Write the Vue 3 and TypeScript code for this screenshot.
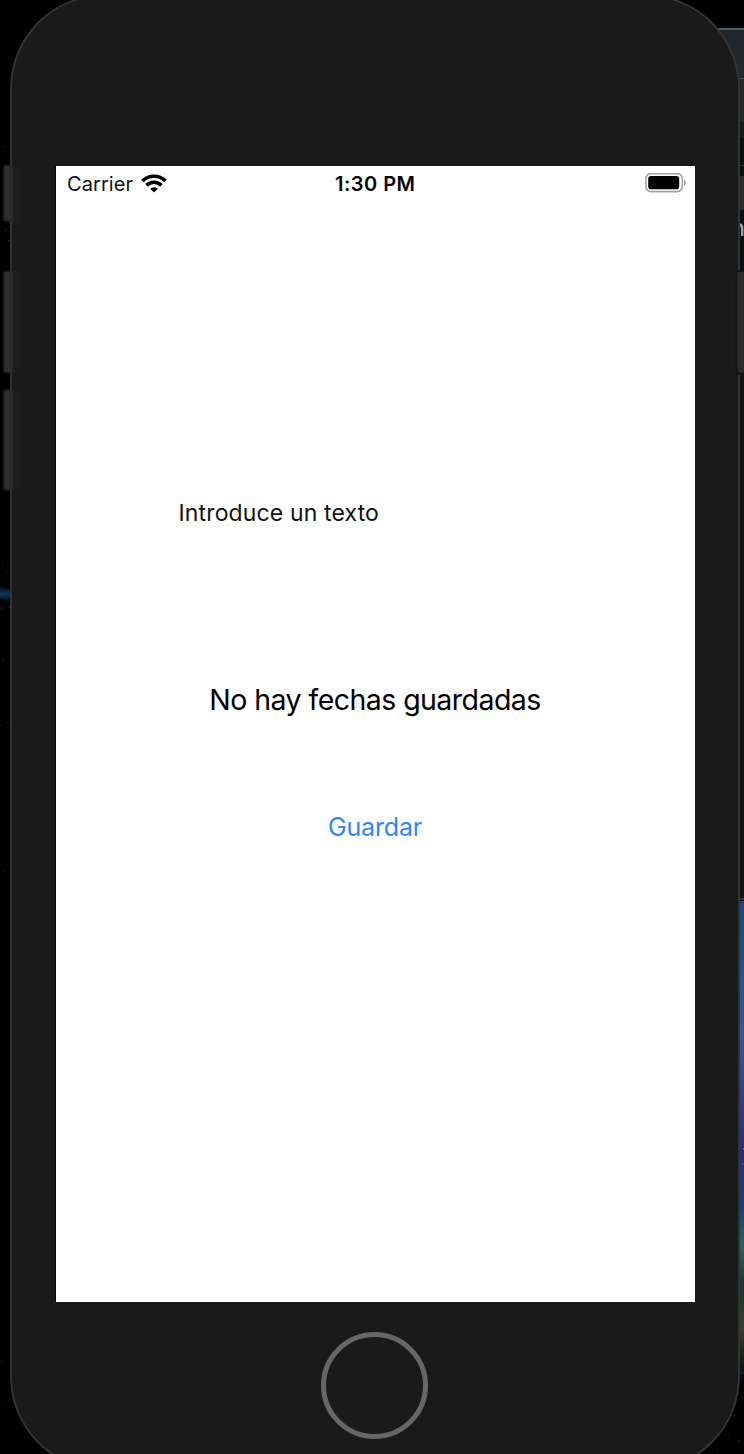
<script setup lang="ts">
const carrier: string = 'Carrier'
const time: string = '1:30 PM'
const stars: { x: number; y: number; c: string }[] = [
  { x: 3, y: 146, c: '#0b2024' }, { x: 7, y: 137, c: '#071316' }, { x: 5, y: 229, c: '#0b3540' },
  { x: 8, y: 240, c: '#0d303c' }, { x: 2, y: 216, c: '#09242b' }, { x: 9, y: 226, c: '#0c2228' },
  { x: 2, y: 564, c: '#15151b' }, { x: 5, y: 570, c: '#1c1c22' }, { x: 9, y: 606, c: '#34302a' },
  { x: 1, y: 607, c: '#333333' }, { x: 2, y: 660, c: '#18222c' }, { x: 7, y: 722, c: '#101c28' },
  { x: 3, y: 870, c: '#1d2430' }, { x: 1, y: 1361, c: '#1c1c1c' }, { x: 4, y: 1403, c: '#111111' },
  { x: 741, y: 1372, c: '#1c2a70' }, { x: 734, y: 1414, c: '#182048' }, { x: 741, y: 1396, c: '#14255a' },
  { x: 728, y: 1433, c: '#131a42' }, { x: 738, y: 1440, c: '#19234f' }, { x: 717, y: 1449, c: '#171f42' },
  { x: 743, y: 1148, c: '#6872c0' }, { x: 742, y: 1163, c: '#5060b0' },
]
</script>

<template>
  <main class="desktop">
    <svg class="backdrop" width="744" height="1454" viewBox="0 0 744 1454" aria-hidden="true">
      <defs>
        <linearGradient id="sky" x1="0" y1="0" x2="0" y2="1">
          <stop offset="0" stop-color="#17497e" />
          <stop offset=".28" stop-color="#335797" />
          <stop offset=".52" stop-color="#252f79" />
          <stop offset=".64" stop-color="#174174" />
          <stop offset=".72" stop-color="#2c5f63" />
          <stop offset=".80" stop-color="#16362f" />
          <stop offset=".89" stop-color="#2b4530" />
          <stop offset="1" stop-color="#03060d" />
        </linearGradient>
        <linearGradient id="bar" x1="0" y1="0" x2="0" y2="1">
          <stop offset="0" stop-color="#20272c" />
          <stop offset="1" stop-color="#24292d" />
        </linearGradient>
        <linearGradient id="comet" x1="0" y1="0" x2="0" y2="1">
          <stop offset="0" stop-color="#000" />
          <stop offset=".5" stop-color="#123461" />
          <stop offset="1" stop-color="#000" />
        </linearGradient>
      </defs>
      <rect x="700" y="28" width="44" height="94" fill="url(#bar)" />
      <rect x="700" y="28" width="44" height="2" fill="#555a5d" />
      <rect x="736" y="78" width="8" height="1" fill="#45494c" />
      <rect x="738" y="122" width="6" height="15" fill="#171b20" />
      <rect x="738" y="137" width="6" height="763" fill="#0b0e13" />
      <rect x="738" y="165" width="6" height="1" fill="#303439" />
      <rect x="738" y="176" width="6" height="34" fill="#2a2a2a" />
      <path d="M738 224.500h1c2 0 3.200 1.500 3.200 4v7.500" fill="none" stroke="#a0a0a0" stroke-width="2.500" />
      <rect x="738" y="374" width="6" height="524" fill="#141414" />
      <rect x="738" y="898" width="6" height="2" fill="#39343c" />
      <rect x="738" y="901" width="6" height="480" fill="url(#sky)" />
      <path d="M0 586l12 4v12l-12-3z" fill="url(#comet)" />
      <rect v-for="(s, i) in stars" :key="i" :x="s.x" :y="s.y" width="1.500" height="1.500" :fill="s.c" />
      <g fill="#2d2d2d" stroke="#111" stroke-width="1.500">
        <rect x="3.200" y="165" width="14" height="56.500" rx="3" />
        <rect x="3.200" y="271" width="14" height="102" rx="3" />
        <rect x="3.200" y="389.500" width="14" height="101" rx="3" />
      </g>
      <rect x="11" y="-4.500" width="728" height="1474" rx="93" fill="#1a1a1a" stroke="#363636" stroke-width="1.800" />
      <g fill="#292929">
        <rect x="10" y="165.500" width="3" height="55.500" />
        <rect x="10" y="271.500" width="3" height="101" />
        <rect x="10" y="390" width="3" height="100" />
      </g>
      <g fill="#1c1c1c">
        <rect x="13" y="166" width="7" height="55" />
        <rect x="13" y="272" width="7" height="100" />
        <rect x="13" y="390" width="7" height="100" />
      </g>
      <rect x="736.500" y="271" width="14" height="102.500" rx="2.500" fill="#2c2c2c" stroke="#111" stroke-width="1.500" />
    </svg>

    <section class="screen">
      <header class="status">
        <div class="network">
          <span class="carrier">{{ carrier }}</span>
          <svg class="wifi" width="26" height="19" viewBox="0 0 26 19" aria-hidden="true">
            <g fill="none" stroke="#000" stroke-width="3.700">
              <path d="M1.500 6.900a16.500 16.500 0 0 1 23 0" />
              <path d="M5.500 11.300a10.800 10.800 0 0 1 15 0" />
            </g>
            <path d="M13 18.600l-3.800-3.900a5.400 5.400 0 0 1 7.600 0z" fill="#000" />
          </svg>
        </div>
        <span class="time">{{ time }}</span>
        <svg class="battery" width="41" height="20" viewBox="0 0 41 20" aria-hidden="true">
          <rect x=".9" y=".6" width="36.400" height="18" rx="5" fill="none" stroke="#a2a2a2" stroke-width="1.600" />
          <rect x="3.200" y="3" width="31" height="13.200" rx="2.800" fill="#000" />
          <path d="M39 6.600c2.200 1 2.200 5.400 0 6.400z" fill="#999" />
        </svg>
      </header>
      <div class="content">
        <label class="prompt"><span>Introduce un texto</span></label>
        <p class="message"><span>No hay fechas guardadas</span></p>
        <button class="save" type="button"><span>Guardar</span></button>
      </div>
    </section>
    <div class="home"></div>
  </main>
</template>

<style>
body { background: #000; }
</style>

<style scoped>
.desktop {
  position: relative;
  box-sizing: border-box;
  width: 744px;
  height: 1454px;
  padding: 166px 49px 0 56px;
  overflow: hidden;
  background: #000;
  font-family: Inter, "Liberation Sans", sans-serif;
  color: #111;
}
.backdrop { position: absolute; top: 0; left: 0; display: block; }
.screen {
  position: relative;
  width: 639px;
  height: 1136px;
  background: #fff;
  box-shadow: -1px 0 0 #080808;
}
.status {
  display: grid;
  grid-template-columns: 1fr auto 1fr;
  align-items: center;
  height: 34px;
  padding: 0 9.500px 0 11px;
}
.network { display: flex; align-items: center; gap: 8px; }
.carrier { padding-top: 2px; font-size: 20px; line-height: 32px; letter-spacing: .08px; }
.wifi { display: block; }
.time { padding: 2px 2px 0 0; font-size: 20px; line-height: 32px; font-weight: 600; letter-spacing: .5px; color: #000; }
.battery { justify-self: end; display: block; }
.content { display: flex; flex-direction: column; align-items: center; }
.prompt {
  box-sizing: border-box;
  width: 100%;
  margin-top: 293px;
  padding-left: 122.500px;
  font-size: 23px;
  line-height: 40px;
  letter-spacing: .14px;
  white-space: nowrap;
}
.message {
  margin: 147px 0 0;
  padding-right: 1px;
  font-size: 28.500px;
  line-height: 40px;
  letter-spacing: -.55px;
  white-space: nowrap;
  color: #000;
}
.save {
  margin: 87px 0 0;
  padding: 0 1px 0 0;
  border: 0;
  background: none;
  font-family: inherit;
  font-size: 25px;
  line-height: 40px;
  letter-spacing: -.15px;
  color: #3185fb;
}
.home {
  position: relative;
  box-sizing: border-box;
  width: 107px;
  height: 107px;
  margin: 30px 0 0 265px;
  border: 5px solid #676767;
  border-radius: 50%;
}
</style>
